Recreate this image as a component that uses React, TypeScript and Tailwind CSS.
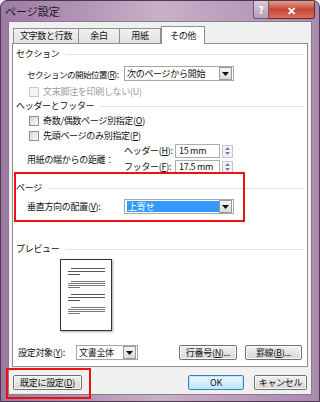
import React from "react";

const font = { fontFamily: '"Noto Sans CJK JP", "Liberation Sans", sans-serif' };

function Arrow() {
  return (
    <div className="flex h-[13px] w-[13px] items-center justify-center border border-[#9a9a9a] bg-gradient-to-b from-[#f4f4f4] to-[#dcdcdc]">
      <svg width="7" height="4" viewBox="0 0 7 4">
        <path d="M0 0h7L3.5 4z" fill="#111" />
      </svg>
    </div>
  );
}

function Select({ value, w, selected }: { value: string; w: string; selected?: boolean }) {
  return (
    <div className={`flex h-[15px] shrink-0 items-center justify-between border border-[#a6a6a6] bg-white pl-[2px] pr-[1px] ${w}`}>
      <span className={`leading-[11px] ${selected ? "w-[93px] bg-[#3399ff] pl-[1px] text-white" : ""}`}>{value}</span>
      <Arrow />
    </div>
  );
}

function Spinner() {
  return (
    <div className="flex h-[13px] w-[11px] flex-col border border-[#c5c5c5] bg-[#f2f2f2]">
      <div className="flex flex-1 items-center justify-center">
        <svg width="5" height="3" viewBox="0 0 5 3"><path d="M0 3h5L2.5 0z" fill="#6a87b5" /></svg>
      </div>
      <div className="flex flex-1 items-center justify-center">
        <svg width="5" height="3" viewBox="0 0 5 3"><path d="M0 0h5L2.5 3z" fill="#6a87b5" /></svg>
      </div>
    </div>
  );
}

function Check({ label, disabled }: { label: React.ReactNode; disabled?: boolean }) {
  return (
    <div className={`flex h-[15px] items-center gap-[4px] pl-[13px] ${disabled ? "text-[#9a9a9a]" : ""}`}>
      <div className={`h-[10px] w-[10px] border ${disabled ? "border-[#c8c8c8] bg-[#f4f4f4]" : "border-[#8e8f8f] bg-gradient-to-br from-[#d8d8d8] to-[#f6f6f6]"}`} />
      <span>{label}</span>
    </div>
  );
}

function Group({ title }: { title: string }) {
  return (
    <div className="flex h-[14px] items-center gap-[6px]">
      <span>{title}</span>
      <div className="h-px flex-1 bg-[#dde3ea]" />
    </div>
  );
}

function Btn({ children, w, def }: { children: React.ReactNode; w: string; def?: boolean }) {
  return (
    <div
      className={`flex h-[15px] items-center justify-center rounded-[2px] border ${w} ${
        def
          ? "border-[#3c7fb1] bg-gradient-to-b from-[#eaf6fd] to-[#bee6fd] shadow-[inset_0_0_0_1px_#bde8fb]"
          : "border-[#707070] bg-gradient-to-b from-[#f2f2f2] to-[#d6d6d6] shadow-[inset_0_0_0_1px_#fcfcfc]"
      }`}
    >
      {children}
    </div>
  );
}

function PagePreview() {
  const block = (
    <div className="flex flex-col gap-[2px]">
      <div className="ml-[3px] h-px w-[34px] bg-[#555]" />
      <div className="h-px w-[37px] bg-[#555]" />
      <div className="h-px w-[12px] bg-[#555]" />
    </div>
  );
  const block2 = (
    <div className="flex flex-col gap-[1px]">
      <div className="ml-[3px] h-px w-[34px] bg-[#777]" />
      <div className="h-px w-[37px] bg-[#777]" />
      <div className="h-px w-[37px] bg-[#777]" />
      <div className="h-px w-[12px] bg-[#777]" />
    </div>
  );
  return (
    <div className="ml-[44px] mt-[3px] flex h-[72px] w-[52px] flex-col gap-[6px] border border-[#333] bg-white px-[7px] pt-[8px] shadow-[1px_1px_2px_rgba(0,0,0,0.35)]">
      {block}
      {block2}
      {block}
      {block2}
    </div>
  );
}

export default function App() {
  return (
    <div style={font} className="relative h-[402px] w-[320px] overflow-hidden whitespace-nowrap bg-white text-[9px] leading-[12px] tracking-[-0.3px] text-[#111]">
      <div className="flex h-[402px] w-[320px] flex-col rounded-t-[7px] border border-[#4a3a50] bg-gradient-to-r from-[#9c7aa2] via-[#c9b0c9] to-[#a98aae] px-[7px] pb-[6px]">
        {/* title bar */}
        <div className="flex h-[20px] items-start justify-between">
          <span className="-ml-[3px] pt-[4px] text-[11px] tracking-normal text-[#1a1a1a]">ページ設定</span>
          <div className="-mr-[3px] flex">
            <div className="flex h-[18px] w-[16px] items-center justify-center rounded-bl-[3px] border border-t-0 border-[#6a5a6e] bg-gradient-to-b from-[#d9cbd9] to-[#b39fb5] text-[10px] font-bold text-white">
              ?
            </div>
            <div className="flex h-[18px] w-[46px] items-center justify-center rounded-br-[3px] border border-l-0 border-t-0 border-[#6a2a22] bg-gradient-to-b from-[#e29b8c] via-[#c7463a] to-[#d8705a] text-[11px] font-bold text-white">
              ✕
            </div>
          </div>
        </div>
        {/* client */}
        <div className="flex flex-1 flex-col border border-[#8a7a8e] bg-[#f0f0f0] px-[3px] pt-[4px]">
          {/* tabs */}
          <div className="flex h-[17px] items-end pl-[1px]">
            <div className="flex h-[15px] w-[66px] items-center justify-center border border-b-0 border-[#8e8f8f] bg-gradient-to-b from-[#f2f2f2] to-[#e1e1e1]">文字数と行数</div>
            <div className="flex h-[15px] w-[41px] items-center justify-center border border-b-0 border-l-0 border-[#8e8f8f] bg-gradient-to-b from-[#f2f2f2] to-[#e1e1e1]">余白</div>
            <div className="flex h-[15px] w-[41px] items-center justify-center border border-b-0 border-l-0 border-[#8e8f8f] bg-gradient-to-b from-[#f2f2f2] to-[#e1e1e1]">用紙</div>
            <div className="relative z-10 -mb-px flex h-[18px] w-[44px] items-center justify-center border border-b-0 border-[#8e8f8f] bg-white">その他</div>
          </div>
          {/* panel */}
          <div className="flex h-[324px] flex-col border border-[#8e8f8f] bg-white px-[3px] pt-[3px]">
            <Group title="セクション" />
            <div className="mt-[5px] flex items-center pl-[11px]">
              <span className="w-[97px] shrink-0 text-[8.5px] tracking-[-0.5px]">セクションの開始位置(<u>R</u>):</span>
              <Select value="次のページから開始" w="w-[110px]" />
            </div>
            <div className="mt-[3px]">
              <Check disabled label="文末脚注を印刷しない(U)" />
            </div>
            <Group title="ヘッダーとフッター" />
            <Check label={<>奇数/偶数ページ別指定(<u>O</u>)</>} />
            <Check label={<>先頭ページのみ別指定(<u>P</u>)</>} />
            <div className="mt-[1px] flex items-center pl-[11px]">
              <span className="w-[97px] pt-[2px]">用紙の端からの距離：</span>
              <div className="flex flex-col gap-[2px]">
                <div className="flex items-center">
                  <span className="w-[51px]">ヘッダー(<u>H</u>):</span>
                  <div className="flex h-[14px] w-[45px] items-center border border-[#abadb3] pl-[3px]">15 mm</div>
                  <div className="ml-[2px]"><Spinner /></div>
                </div>
                <div className="flex items-center">
                  <span className="w-[51px]">フッター(<u>F</u>):</span>
                  <div className="flex h-[14px] w-[45px] items-center border border-[#abadb3] pl-[3px]">17.5 mm</div>
                  <div className="ml-[2px]"><Spinner /></div>
                </div>
              </div>
            </div>
            <div className="mt-[7px]">
              <Group title="ページ" />
            </div>
            <div className="mt-[4px] flex items-center pl-[11px]">
              <span className="w-[97px]">垂直方向の配置(<u>V</u>):</span>
              <Select value="上寄せ" w="w-[110px]" selected />
            </div>
            <div className="mt-[28px]">
              <Group title="プレビュー" />
            </div>
            <PagePreview />
            <div className="mt-[14px] flex items-center pl-[2px]">
              <span className="w-[58px]">設定対象(<u>Y</u>):</span>
              <Select value="文書全体" w="w-[62px]" />
              <div className="ml-[41px]">
                <Btn w="w-[58px]">行番号(<u>N</u>)...</Btn>
              </div>
              <div className="ml-[8px]">
                <Btn w="w-[57px]">罫線(<u>B</u>)...</Btn>
              </div>
            </div>
          </div>
          {/* footer */}
          <div className="mt-[8px] flex items-center">
            <div className="ml-[1px]">
              <Btn w="w-[69px]">既定に設定(<u>D</u>)</Btn>
            </div>
            <div className="ml-auto flex gap-[10px] pr-[1px]">
              <Btn w="w-[56px]" def>OK</Btn>
              <Btn w="w-[53px]">キャンセル</Btn>
            </div>
          </div>
        </div>
      </div>
      {/* annotation boxes */}
      <div className="pointer-events-none absolute left-[14px] top-[172px] h-[50px] w-[231px] border-2 border-[#ee1111]" />
      <div className="pointer-events-none absolute left-[6px] top-[368px] h-[31px] w-[85px] border-2 border-[#ee1111]" />
    </div>
  );
}
